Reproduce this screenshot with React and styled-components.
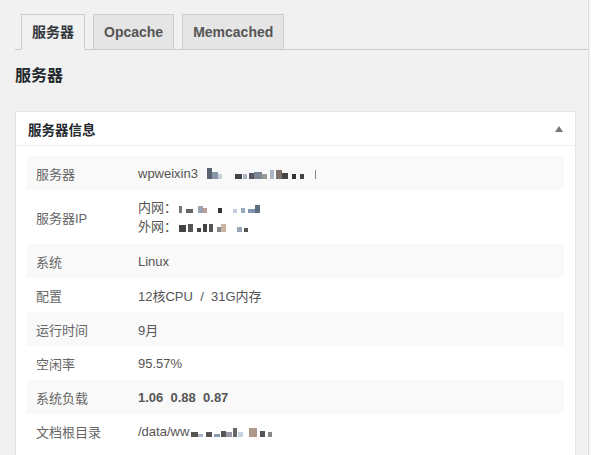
import React from 'react';
import styled, { createGlobalStyle } from 'styled-components';

const GlobalStyle = createGlobalStyle`
	html, body {
		margin: 0;
		padding: 0;
		background: #f6f6f6;
	}
	body {
		font-family: "Liberation Sans", "Noto Sans CJK SC", Arial, sans-serif;
		color: #555;
		overflow: hidden;
	}
`;

const rows = [
	{ label: '服务器', value: 'wpweixin3', mosaic: 'host' },
	{ label: '服务器IP', lines: [['内网：', 'lan'], ['外网：', 'wan']] },
	{ label: '系统', value: 'Linux' },
	{ label: '配置', value: '12核CPU  /  31G内存' },
	{ label: '运行时间', value: '9月' },
	{ label: '空闲率', value: '95.57%' },
	{ label: '系统负载', value: '1.06  0.88  0.87', bold: true },
	{ label: '文档根目录', value: '/data/ww', mosaic: 'root' },
];

// pixelated blocks that hide private values: [width, height, colour, gap before]
const mosaics = {
	host: [
		[4, 8, '#5a6470', 5], [4, 5, '#8a97a6', 0], [3, 3, '#c8d2dc', 0],
		[5, 3, '#444', 10], [3, 3, '#aab4c0', 1], [4, 4, '#556', 1], [6, 5, '#7b8794', 0],
		[4, 3, '#999', 0], [3, 6, '#a9b6c4', 2], [5, 6, '#7d7066', 1], [4, 4, '#444', 0],
		[3, 3, '#333', 3], [3, 3, '#444', 3], [1, 6, '#888', 8],
	],
	lan: [
		[2, 5, '#777', 0], [5, 3, '#666', 3], [4, 5, '#9aa5b4', 4], [3, 4, '#bb9f96', 0],
		[3, 4, '#333', 8], [3, 3, '#c0ccdc', 8], [3, 4, '#99a9bc', 3], [5, 3, '#8095b0', 2],
		[4, 6, '#5e6e86', 0],
	],
	wan: [
		[5, 5, '#444', 0], [3, 6, '#555', 2], [3, 3, '#444', 3], [3, 6, '#444', 2], [3, 6, '#555', 1],
		[3, 4, '#888', 3], [4, 6, '#c9b4a4', 0], [4, 4, '#9aa6b6', 8], [3, 3, '#555', 1],
	],
	root: [
		[5, 3, '#555', 0], [4, 2, '#aab7c6', 0], [4, 3, '#555', 2], [4, 2, '#8b9bb0', 2],
		[4, 4, '#555', 1], [4, 3, '#99a', 0], [3, 6, '#666', 1], [3, 3, '#c8d4e0', 1],
		[6, 6, '#b09888', 5], [4, 4, '#555', 2], [3, 3, '#888', 2],
	],
};

const SCALE = 1.35;

const Mosaic = ({ blocks }) => (
	<Blur>
		{blocks.map(([w, h, c, g], i) => (
			<Pixel
				key={i}
				style={{ width: w * SCALE, height: h * SCALE, background: c, marginLeft: g * SCALE }}
			/>
		))}
	</Blur>
);

const App = () => {
	return (
		<>
			<GlobalStyle />
			<Page>
				<Tabs>
					<Tab $active>服务器</Tab>
					<Tab>Opcache</Tab>
					<Tab>Memcached</Tab>
				</Tabs>
				<Title>服务器</Title>
				<Panel>
					<PanelHead>
						<h2>服务器信息</h2>
						<svg width="8" height="6" viewBox="0 0 8 6">
							<path d="M4 0 L8 6 L0 6 Z" fill="#72777c" />
						</svg>
					</PanelHead>
					<Table>
						{rows.map((r, i) => (
							<Row key={r.label} $odd={i % 2 === 0}>
								<Label>{r.label}</Label>
								{r.lines ? (
									<Lines>
										{r.lines.map(([k, m]) => (
											<div key={k}>
												{k}
												<Mosaic blocks={mosaics[m]} />
											</div>
										))}
									</Lines>
								) : (
									<Value $bold={r.bold}>
										{r.value}
										{r.mosaic && <Mosaic blocks={mosaics[r.mosaic]} />}
									</Value>
								)}
							</Row>
						))}
					</Table>
				</Panel>
			</Page>
		</>
	);
};

export default App;

const Page = styled.div`
	width: 573px;
	height: 455px;
	padding-left: 15px;
	background: #f1f1f1;
	border-right: 1px solid #dcdcdc;
	overflow: hidden;
`;

const Tabs = styled.div`
	display: flex;
	gap: 8px;
	padding: 14px 0 0 6px;
	border-bottom: 1px solid #ccc;
`;

const Tab = styled.div`
	padding: 5px 10px;
	border: 1px solid #ccc;
	margin-bottom: -1px;
	font-size: 14px;
	line-height: 24px;
	font-weight: 700;
	background: ${(p) => (p.$active ? '#f1f1f1' : '#e5e5e5')};
	color: ${(p) => (p.$active ? '#32373c' : '#555')};
	border-bottom: 1px solid ${(p) => (p.$active ? '#f1f1f1' : '#ccc')};
`;

const Title = styled.h1`
	margin: 15px 0 24px;
	font-size: 16px;
	line-height: 22px;
	font-weight: 700;
	color: #23282d;
`;

const Panel = styled.div`
	width: 559px;
	height: 400px;
	background: #fff;
	border: 1px solid #e5e5e5;
`;

const PanelHead = styled.div`
	display: flex;
	align-items: center;
	justify-content: space-between;
	height: 33px;
	padding: 0 12px;
	border-bottom: 1px solid #eee;

	h2 {
		margin: 0;
		font-size: 13.5px;
		font-weight: 700;
		color: #23282d;
	}
`;

const Table = styled.div`
	margin: 10px 11px 0 11px;
`;

const Row = styled.div`
	display: grid;
	grid-template-columns: 111px 1fr;
	align-items: center;
	min-height: 34px;
	background: ${(p) => (p.$odd ? '#f9f9f9' : '#fff')};
	font-size: 13px;
`;

const Label = styled.div`
	padding-left: 9px;
	color: #666;
`;

const Value = styled.div`
	color: #555;
	white-space: pre;
	font-weight: ${(p) => (p.$bold ? 700 : 400)};
	display: flex;
	align-items: center;
`;

const Lines = styled.div`
	padding: 8px 0;
	line-height: 19px;
	color: #555;

	div {
		display: flex;
		align-items: center;
	}
`;

const Blur = styled.span`
	display: inline-flex;
	align-items: flex-end;
	height: 11px;
	margin-left: 2px;
	filter: blur(0.6px);
`;

const Pixel = styled.span`
	display: inline-block;
	flex: none;
`;
